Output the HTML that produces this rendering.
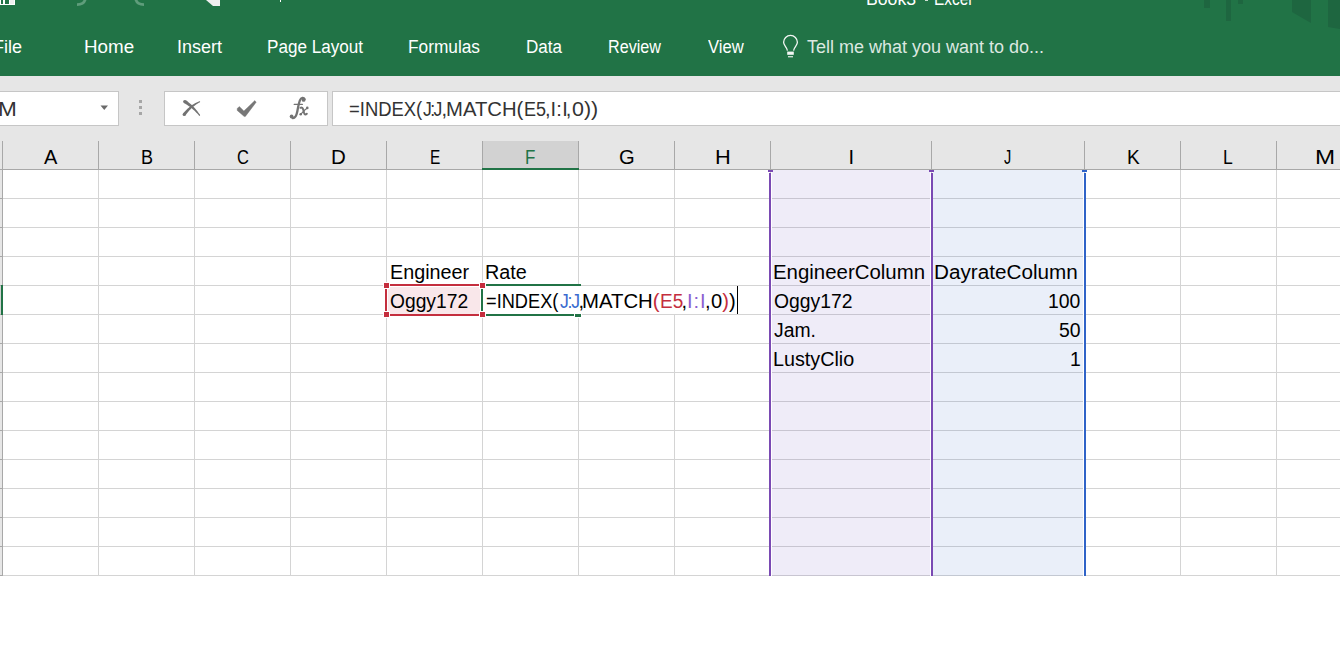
<!DOCTYPE html>
<html><head><meta charset="utf-8"><style>
html,body{margin:0;padding:0;}
body{width:1340px;height:648px;overflow:hidden;position:relative;background:#fff;font-family:"Liberation Sans",sans-serif;}
body>div,body>svg{position:absolute;}
.t{white-space:pre;}
</style></head><body>
<div style="left:0px;top:0px;width:1340px;height:76px;background:#217346;"></div>
<svg style="position:absolute;left:1180px;top:0" width="160" height="40" viewBox="0 0 160 40">
<g fill="#1e6640">
<rect x="24" y="0" width="6" height="8"/>
<rect x="46" y="0" width="5" height="21"/>
<rect x="58" y="0" width="5" height="4"/>
<path d="M112 0 H131 V23 L112 12 Z"/>
<path d="M148 0 H160 V29 L148 27 Z"/>
</g></svg>
<svg style="position:absolute;left:0;top:0" width="300" height="10" viewBox="0 0 300 10">
<rect x="0" y="0" width="15" height="5" fill="#fff"/>
<rect x="1" y="0" width="2" height="4" fill="#217346"/>
<rect x="5" y="0" width="4" height="4" fill="#217346"/>
<rect x="10" y="0" width="4" height="4" fill="#efefef"/>
<path d="M77 4.6 Q84 4.6 85.4 -1" stroke="#5f9d7b" stroke-width="2.7" fill="none"/>
<path d="M144 4.6 Q137 4.6 135.6 -1" stroke="#5f9d7b" stroke-width="2.7" fill="none"/>
<path d="M206 0 H220 V6 H213 Z" fill="#efefef"/>
<rect x="280" y="0" width="1" height="2" fill="#fff"/>
</svg>
<div class="t" style="left:866.22px;top:-10px;font-size:18px;line-height:18px;color:#fff;transform:scaleX(0.9816);transform-origin:0 0;">Book3</div>
<div class="t" style="left:934.14px;top:-10px;font-size:18px;line-height:18px;color:#fff;transform:scaleX(0.8571);transform-origin:0 0;">Excel</div>
<div style="left:925px;top:0px;width:3px;height:1px;background:#cfe0d5;"></div>
<div class="t" style="left:-7px;top:38px;font-size:18px;line-height:18px;color:#fff">File</div>
<div class="t" style="left:83.96px;top:38px;font-size:18px;line-height:18px;color:#fff;transform:scaleX(1.0435);transform-origin:0 0;">Home</div>
<div class="t" style="left:177.00px;top:38px;font-size:18px;line-height:18px;color:#fff;">Insert</div>
<div class="t" style="left:267.05px;top:38px;font-size:18px;line-height:18px;color:#fff;transform:scaleX(0.9500);transform-origin:0 0;">Page Layout</div>
<div class="t" style="left:408.04px;top:38px;font-size:18px;line-height:18px;color:#fff;transform:scaleX(0.9595);transform-origin:0 0;">Formulas</div>
<div class="t" style="left:526.05px;top:38px;font-size:18px;line-height:18px;color:#fff;transform:scaleX(0.9459);transform-origin:0 0;">Data</div>
<div class="t" style="left:608.10px;top:38px;font-size:18px;line-height:18px;color:#fff;transform:scaleX(0.8966);transform-origin:0 0;">Review</div>
<div class="t" style="left:708.00px;top:38px;font-size:18px;line-height:18px;color:#fff;transform:scaleX(0.9231);transform-origin:0 0;">View</div>
<div class="t" style="left:807.00px;top:38px;font-size:18px;line-height:18px;color:#dce8e0;">Tell me what you want to do...</div>
<svg style="position:absolute;left:780px;top:32px" width="22" height="28" viewBox="0 0 22 28">
<path d="M7.4 18.6 C7 14.8 3.6 13.6 3.6 10.3 A6.9 6.9 0 0 1 17.4 10.3 C17.4 13.6 14 14.8 13.6 18.6" fill="none" stroke="#f4f7f5" stroke-width="1.3"/>
<rect x="7.2" y="19.6" width="6.6" height="3.2" fill="#f4f7f5"/>
<rect x="8" y="24.2" width="5" height="1.1" fill="#f4f7f5"/>
</svg>
<div style="left:0px;top:76px;width:1340px;height:93px;background:#e6e6e6;"></div>
<div style="left:-2px;top:91px;width:121px;height:35px;background:#fff;border:1px solid #c6c6c6;box-sizing:border-box"></div>
<div class="t" style="left:-2px;top:99px;font-size:20px;line-height:20px;color:#333;transform:scaleX(1.13);transform-origin:0 0">M</div>
<svg style="position:absolute;left:100px;top:105px" width="9" height="6" viewBox="0 0 9 6"><path d="M0.5 0.5 H8 L4.25 5 Z" fill="#6a6a6a"/></svg>
<div style="left:139px;top:100px;width:3px;height:3px;background:#a6a6a6;"></div>
<div style="left:139px;top:106px;width:3px;height:3px;background:#a6a6a6;"></div>
<div style="left:139px;top:112px;width:3px;height:3px;background:#a6a6a6;"></div>
<div style="left:164px;top:91px;width:164px;height:35px;background:#fff;border:1px solid #c6c6c6;box-sizing:border-box"></div>
<svg style="position:absolute;left:164px;top:91px" width="164" height="35" viewBox="0 0 164 35">
<g fill="#727272"><path d="M19.91 12.05 L20.93 12.61 L21.94 13.20 L22.94 13.81 L23.93 14.46 L24.91 15.14 L25.88 15.84 L26.84 16.58 L27.79 17.34 L28.73 18.14 L29.66 18.97 L30.58 19.82 L31.49 20.71 L32.39 21.63 L33.28 22.58 L34.16 23.55 L35.02 24.56 L35.98 23.84 L35.21 22.72 L34.42 21.64 L33.61 20.58 L32.79 19.54 L31.96 18.53 L31.11 17.55 L30.24 16.59 L29.36 15.66 L28.46 14.75 L27.54 13.87 L26.61 13.02 L25.66 12.19 L24.69 11.39 L23.70 10.62 L22.70 9.87 L21.69 9.15Z"/><circle cx="20.8" cy="10.6" r="1.70"/><circle cx="35.5" cy="24.2" r="0.60"/><path d="M35.38 10.30 L34.26 10.74 L33.16 11.23 L32.07 11.76 L30.98 12.33 L29.91 12.94 L28.85 13.60 L27.80 14.30 L26.77 15.05 L25.74 15.83 L24.73 16.66 L23.73 17.53 L22.74 18.45 L21.77 19.40 L20.81 20.40 L19.86 21.44 L18.93 22.53 L21.47 24.47 L22.25 23.37 L23.05 22.31 L23.86 21.28 L24.68 20.29 L25.52 19.34 L26.38 18.42 L27.25 17.55 L28.13 16.70 L29.04 15.90 L29.95 15.13 L30.89 14.40 L31.84 13.71 L32.81 13.05 L33.80 12.43 L34.80 11.85 L35.82 11.30Z"/><circle cx="35.6" cy="10.8" r="0.55"/><circle cx="20.2" cy="23.5" r="1.60"/>
<path d="M73.2 17.4 L75.4 15.6 L79.9 20 L90.8 9.6 L92.2 11.2 L81.4 25.4 L80.2 25.5 L73.2 19.4 Z" stroke="#777" stroke-width="0.4" stroke-linejoin="round" fill="#777"/>
</g></svg>
<svg style="position:absolute;left:284px;top:94px" width="30" height="28" viewBox="0 0 30 28">
<g fill="none" stroke="#737373" stroke-linecap="round">
<path d="M20.6 5.2 C19.8 3.4 17.2 3.2 15.9 6.4 C14.9 9 14.1 13 13.3 17.5 C12.5 21.5 11.2 24.2 8.8 24" stroke-width="2.3"/>
<path d="M10.3 10.4 H18.3" stroke-width="1.4"/>
<path d="M16.4 13.8 C17.8 13.1 18.8 13.9 19.3 15.8 L20.1 19 C20.6 20.7 21.6 20.9 22.8 19.7" stroke-width="2.0"/>
<path d="M23.3 13.9 C21 15.4 18.6 18 16.7 20.3" stroke-width="1.2"/>
</g>
<g fill="#737373"><circle cx="19.6" cy="5.9" r="1.9"/><circle cx="7.6" cy="22.5" r="1.9"/><circle cx="23.3" cy="13.9" r="1.3"/><circle cx="16.7" cy="20.2" r="1.3"/></g>
</svg>
<div style="left:332px;top:91px;width:1020px;height:35px;background:#fff;border:1px solid #c6c6c6;box-sizing:border-box"></div>
<div class="t" style="left:348.78px;top:99px;font-size:20px;line-height:20px;color:#333;transform:scaleX(0.9218);transform-origin:0 0;">=INDEX(</div>
<div class="t" style="left:423.00px;top:99px;font-size:20px;line-height:20px;color:#333;transform:scaleX(0.8800);transform-origin:0 0;letter-spacing:-1.77px;">J:J</div>
<div class="t" style="left:441.60px;top:99px;font-size:20px;line-height:20px;color:#333;">,</div>
<div class="t" style="left:445.77px;top:99px;font-size:20px;line-height:20px;color:#333;transform:scaleX(1.0135);transform-origin:0 0;">MATCH(</div>
<div class="t" style="left:523.60px;top:99px;font-size:20px;line-height:20px;color:#333;transform:scaleX(0.9000);transform-origin:0 0;">E5</div>
<div class="t" style="left:544.90px;top:99px;font-size:20px;line-height:20px;color:#333;">,</div>
<div class="t" style="left:550.50px;top:99px;font-size:20px;line-height:20px;color:#333;letter-spacing:0.30px;">I:I</div>
<div class="t" style="left:565.80px;top:99px;font-size:20px;line-height:20px;color:#333;">,</div>
<div class="t" style="left:572.33px;top:99px;font-size:20px;line-height:20px;color:#333;transform:scaleX(1.0727);transform-origin:0 0;">0))</div>
<div style="left:483px;top:141px;width:95px;height:28px;background:#d2d2d2;"></div>
<div style="left:2px;top:141px;width:1px;height:28px;background:#a8a8a8;"></div>
<div style="left:98px;top:141px;width:1px;height:28px;background:#a8a8a8;"></div>
<div style="left:194px;top:141px;width:1px;height:28px;background:#a8a8a8;"></div>
<div style="left:290px;top:141px;width:1px;height:28px;background:#a8a8a8;"></div>
<div style="left:386px;top:141px;width:1px;height:28px;background:#a8a8a8;"></div>
<div style="left:482px;top:141px;width:1px;height:28px;background:#a8a8a8;"></div>
<div style="left:578px;top:141px;width:1px;height:28px;background:#a8a8a8;"></div>
<div style="left:674px;top:141px;width:1px;height:28px;background:#a8a8a8;"></div>
<div style="left:770px;top:141px;width:1px;height:28px;background:#a8a8a8;"></div>
<div style="left:931px;top:141px;width:1px;height:28px;background:#a8a8a8;"></div>
<div style="left:1084px;top:141px;width:1px;height:28px;background:#a8a8a8;"></div>
<div style="left:1180px;top:141px;width:1px;height:28px;background:#a8a8a8;"></div>
<div style="left:1276px;top:141px;width:1px;height:28px;background:#a8a8a8;"></div>
<div style="left:1372px;top:141px;width:1px;height:28px;background:#a8a8a8;"></div>
<div style="left:0px;top:169px;width:1340px;height:1px;background:#a8a8a8;"></div>
<div style="left:482px;top:168px;width:97px;height:2px;background:#217346;"></div>
<div class="t" style="left:44.00px;top:147px;font-size:20px;line-height:20px;color:#000;">A</div>
<div class="t" style="left:140.50px;top:147px;font-size:20px;line-height:20px;color:#000;transform:scaleX(0.9000);transform-origin:0 0;">B</div>
<div class="t" style="left:236.73px;top:147px;font-size:20px;line-height:20px;color:#000;transform:scaleX(0.8231);transform-origin:0 0;">C</div>
<div class="t" style="left:330.80px;top:147px;font-size:20px;line-height:20px;color:#000;transform:scaleX(1.0250);transform-origin:0 0;">D</div>
<div class="t" style="left:429.50px;top:147px;font-size:20px;line-height:20px;color:#000;transform:scaleX(0.7727);transform-origin:0 0;">E</div>
<div class="t" style="left:525.35px;top:147px;font-size:20px;line-height:20px;color:#217346;transform:scaleX(0.8500);transform-origin:0 0;">F</div>
<div class="t" style="left:619.24px;top:147px;font-size:20px;line-height:20px;color:#000;transform:scaleX(1.0077);transform-origin:0 0;">G</div>
<div class="t" style="left:714.82px;top:147px;font-size:20px;line-height:20px;color:#000;transform:scaleX(1.0909);transform-origin:0 0;">H</div>
<div class="t" style="left:848.50px;top:147px;font-size:20px;line-height:20px;color:#000;">I</div>
<div class="t" style="left:1004.25px;top:147px;font-size:20px;line-height:20px;color:#000;transform:scaleX(0.7222);transform-origin:0 0;">J</div>
<div class="t" style="left:1126.64px;top:147px;font-size:20px;line-height:20px;color:#000;transform:scaleX(0.9545);transform-origin:0 0;">K</div>
<div class="t" style="left:1223.29px;top:147px;font-size:20px;line-height:20px;color:#000;transform:scaleX(0.8778);transform-origin:0 0;">L</div>
<div class="t" style="left:1314.73px;top:147px;font-size:20px;line-height:20px;color:#000;transform:scaleX(1.2077);transform-origin:0 0;">M</div>
<div style="left:0px;top:170px;width:2px;height:405px;background:#e6e6e6;"></div>
<div style="left:2px;top:141px;width:1px;height:435px;background:#a8a8a8;"></div>
<div style="left:0px;top:198px;width:3px;height:1px;background:#a8a8a8;"></div>
<div style="left:3px;top:198px;width:1337px;height:1px;background:#d4d4d4;"></div>
<div style="left:0px;top:227px;width:3px;height:1px;background:#a8a8a8;"></div>
<div style="left:3px;top:227px;width:1337px;height:1px;background:#d4d4d4;"></div>
<div style="left:0px;top:256px;width:3px;height:1px;background:#a8a8a8;"></div>
<div style="left:3px;top:256px;width:1337px;height:1px;background:#d4d4d4;"></div>
<div style="left:0px;top:285px;width:3px;height:1px;background:#a8a8a8;"></div>
<div style="left:3px;top:285px;width:1337px;height:1px;background:#d4d4d4;"></div>
<div style="left:0px;top:314px;width:3px;height:1px;background:#a8a8a8;"></div>
<div style="left:3px;top:314px;width:1337px;height:1px;background:#d4d4d4;"></div>
<div style="left:0px;top:343px;width:3px;height:1px;background:#a8a8a8;"></div>
<div style="left:3px;top:343px;width:1337px;height:1px;background:#d4d4d4;"></div>
<div style="left:0px;top:372px;width:3px;height:1px;background:#a8a8a8;"></div>
<div style="left:3px;top:372px;width:1337px;height:1px;background:#d4d4d4;"></div>
<div style="left:0px;top:401px;width:3px;height:1px;background:#a8a8a8;"></div>
<div style="left:3px;top:401px;width:1337px;height:1px;background:#d4d4d4;"></div>
<div style="left:0px;top:430px;width:3px;height:1px;background:#a8a8a8;"></div>
<div style="left:3px;top:430px;width:1337px;height:1px;background:#d4d4d4;"></div>
<div style="left:0px;top:459px;width:3px;height:1px;background:#a8a8a8;"></div>
<div style="left:3px;top:459px;width:1337px;height:1px;background:#d4d4d4;"></div>
<div style="left:0px;top:488px;width:3px;height:1px;background:#a8a8a8;"></div>
<div style="left:3px;top:488px;width:1337px;height:1px;background:#d4d4d4;"></div>
<div style="left:0px;top:517px;width:3px;height:1px;background:#a8a8a8;"></div>
<div style="left:3px;top:517px;width:1337px;height:1px;background:#d4d4d4;"></div>
<div style="left:0px;top:546px;width:3px;height:1px;background:#a8a8a8;"></div>
<div style="left:3px;top:546px;width:1337px;height:1px;background:#d4d4d4;"></div>
<div style="left:0px;top:575px;width:3px;height:1px;background:#a8a8a8;"></div>
<div style="left:3px;top:575px;width:1337px;height:1px;background:#d4d4d4;"></div>
<div style="left:0px;top:286px;width:1px;height:28px;background:#d2d2d2;"></div>
<div style="left:1px;top:285px;width:2px;height:30px;background:#217346;"></div>
<div style="left:98px;top:170px;width:1px;height:405px;background:#d4d4d4;"></div>
<div style="left:194px;top:170px;width:1px;height:405px;background:#d4d4d4;"></div>
<div style="left:290px;top:170px;width:1px;height:405px;background:#d4d4d4;"></div>
<div style="left:386px;top:170px;width:1px;height:405px;background:#d4d4d4;"></div>
<div style="left:482px;top:170px;width:1px;height:405px;background:#d4d4d4;"></div>
<div style="left:578px;top:170px;width:1px;height:405px;background:#d4d4d4;"></div>
<div style="left:674px;top:170px;width:1px;height:405px;background:#d4d4d4;"></div>
<div style="left:770px;top:170px;width:1px;height:405px;background:#d4d4d4;"></div>
<div style="left:931px;top:170px;width:1px;height:405px;background:#d4d4d4;"></div>
<div style="left:1084px;top:170px;width:1px;height:405px;background:#d4d4d4;"></div>
<div style="left:1180px;top:170px;width:1px;height:405px;background:#d4d4d4;"></div>
<div style="left:1276px;top:170px;width:1px;height:405px;background:#d4d4d4;"></div>
<div style="left:577px;top:286px;width:100px;height:28px;background:#fff;"></div>
<div style="left:771px;top:170px;width:1px;height:406px;background:#fff;"></div>
<div style="left:930px;top:170px;width:1px;height:406px;background:#fff;"></div>
<div style="left:1083px;top:170px;width:1px;height:406px;background:#fff;"></div>
<div style="left:772px;top:170px;width:158px;height:406px;background:rgba(112,80,192,0.11);"></div>
<div style="left:933px;top:170px;width:150px;height:406px;background:rgba(60,110,200,0.11);"></div>
<div style="left:388px;top:287px;width:92px;height:27px;background:rgba(200,40,60,0.11);"></div>
<div style="left:1084px;top:173px;width:2px;height:403px;background:#2f63c8;"></div>
<div style="left:1082px;top:170px;width:5px;height:2px;background:#2f63c8;"></div>
<div style="left:769px;top:173px;width:2px;height:403px;background:#7a4ab3;"></div>
<div style="left:931px;top:173px;width:2px;height:403px;background:#7a4ab3;"></div>
<div style="left:768px;top:170px;width:5px;height:2px;background:#7a4ab3;"></div>
<div style="left:929px;top:170px;width:5px;height:2px;background:#7a4ab3;"></div>
<div style="left:390px;top:284px;width:89px;height:2px;background:#c42e3e;"></div>
<div style="left:390px;top:314px;width:89px;height:2px;background:#c42e3e;"></div>
<div style="left:385px;top:289px;width:2px;height:22px;background:#c42e3e;"></div>
<div style="left:383px;top:282px;width:7px;height:7px;background:#fff;"></div>
<div style="left:383px;top:311px;width:7px;height:7px;background:#fff;"></div>
<div style="left:479px;top:282px;width:7px;height:7px;background:#fff;"></div>
<div style="left:479px;top:311px;width:7px;height:7px;background:#fff;"></div>
<div style="left:384px;top:283px;width:5px;height:5px;background:#c42e3e;"></div>
<div style="left:384px;top:312px;width:5px;height:5px;background:#c42e3e;"></div>
<div style="left:480px;top:283px;width:5px;height:5px;background:#c42e3e;"></div>
<div style="left:480px;top:312px;width:5px;height:5px;background:#c42e3e;"></div>
<div style="left:486px;top:284px;width:95px;height:2px;background:#217346;"></div>
<div style="left:481px;top:289px;width:2px;height:22px;background:#217346;"></div>
<div style="left:486px;top:314px;width:88px;height:2px;background:#217346;"></div>
<div style="left:574px;top:313px;width:8px;height:5px;background:#fff;"></div>
<div style="left:575px;top:314px;width:6px;height:3px;background:#217346;"></div>
<div class="t" style="left:389.53px;top:262px;font-size:20px;line-height:20px;color:#000;transform:scaleX(0.9872);transform-origin:0 0;">Engineer</div>
<div class="t" style="left:485.42px;top:262px;font-size:20px;line-height:20px;color:#000;transform:scaleX(0.9897);transform-origin:0 0;">Rate</div>
<div class="t" style="left:389.54px;top:291px;font-size:20px;line-height:20px;color:#000;transform:scaleX(0.9620);transform-origin:0 0;">Oggy172</div>
<div class="t" style="left:485.89px;top:291px;font-size:20px;line-height:20px;color:#000;transform:scaleX(0.9103);transform-origin:0 0;">=INDEX(</div>
<div class="t" style="left:560.00px;top:291px;font-size:20px;line-height:20px;color:#3a6bd0;transform:scaleX(0.8800);transform-origin:0 0;letter-spacing:-1.37px;">J:J</div>
<div class="t" style="left:578.40px;top:291px;font-size:20px;line-height:20px;color:#000;">,</div>
<div class="t" style="left:582.47px;top:291px;font-size:20px;line-height:20px;color:#000;transform:scaleX(1.0162);transform-origin:0 0;">MATCH<span style="color:#c42e3e">(</span></div>
<div class="t" style="left:659.60px;top:291px;font-size:20px;line-height:20px;color:#c42e3e;transform:scaleX(0.9500);transform-origin:0 0;">E5</div>
<div class="t" style="left:681.60px;top:291px;font-size:20px;line-height:20px;color:#000;">,</div>
<div class="t" style="left:687.00px;top:291px;font-size:20px;line-height:20px;color:#8b5fd0;letter-spacing:0.95px;">I:I</div>
<div class="t" style="left:704.90px;top:291px;font-size:20px;line-height:20px;color:#000;">,</div>
<div class="t" style="left:711.20px;top:291px;font-size:20px;line-height:20px;color:#000;transform:scaleX(1.0045);transform-origin:0 0;">0<span style="color:#c42e3e">)</span>)</div>
<div style="left:737px;top:286px;width:1px;height:28px;background:#000;"></div>
<div class="t" style="left:772.96px;top:262px;font-size:20px;line-height:20px;color:#000;transform:scaleX(1.0205);transform-origin:0 0;">EngineerColumn</div>
<div class="t" style="left:933.93px;top:262px;font-size:20px;line-height:20px;color:#000;transform:scaleX(1.0346);transform-origin:0 0;">DayrateColumn</div>
<div class="t" style="left:773.63px;top:291px;font-size:20px;line-height:20px;color:#000;transform:scaleX(0.9671);transform-origin:0 0;">Oggy172</div>
<div class="t" style="left:774.00px;top:320px;font-size:20px;line-height:20px;color:#000;transform:scaleX(0.9667);transform-origin:0 0;">Jam.</div>
<div class="t" style="left:773.02px;top:349px;font-size:20px;line-height:20px;color:#000;transform:scaleX(0.9875);transform-origin:0 0;">LustyClio</div>
<div class="t" style="left:1048.39px;top:291px;font-size:20px;line-height:20px;color:#000;transform:scaleX(0.9700);transform-origin:0 0;">100</div>
<div class="t" style="left:1058.66px;top:320px;font-size:20px;line-height:20px;color:#000;transform:scaleX(0.9700);transform-origin:0 0;">50</div>
<div class="t" style="left:1069.90px;top:349px;font-size:20px;line-height:20px;color:#000;transform:scaleX(0.9700);transform-origin:0 0;">1</div>
</body></html>
